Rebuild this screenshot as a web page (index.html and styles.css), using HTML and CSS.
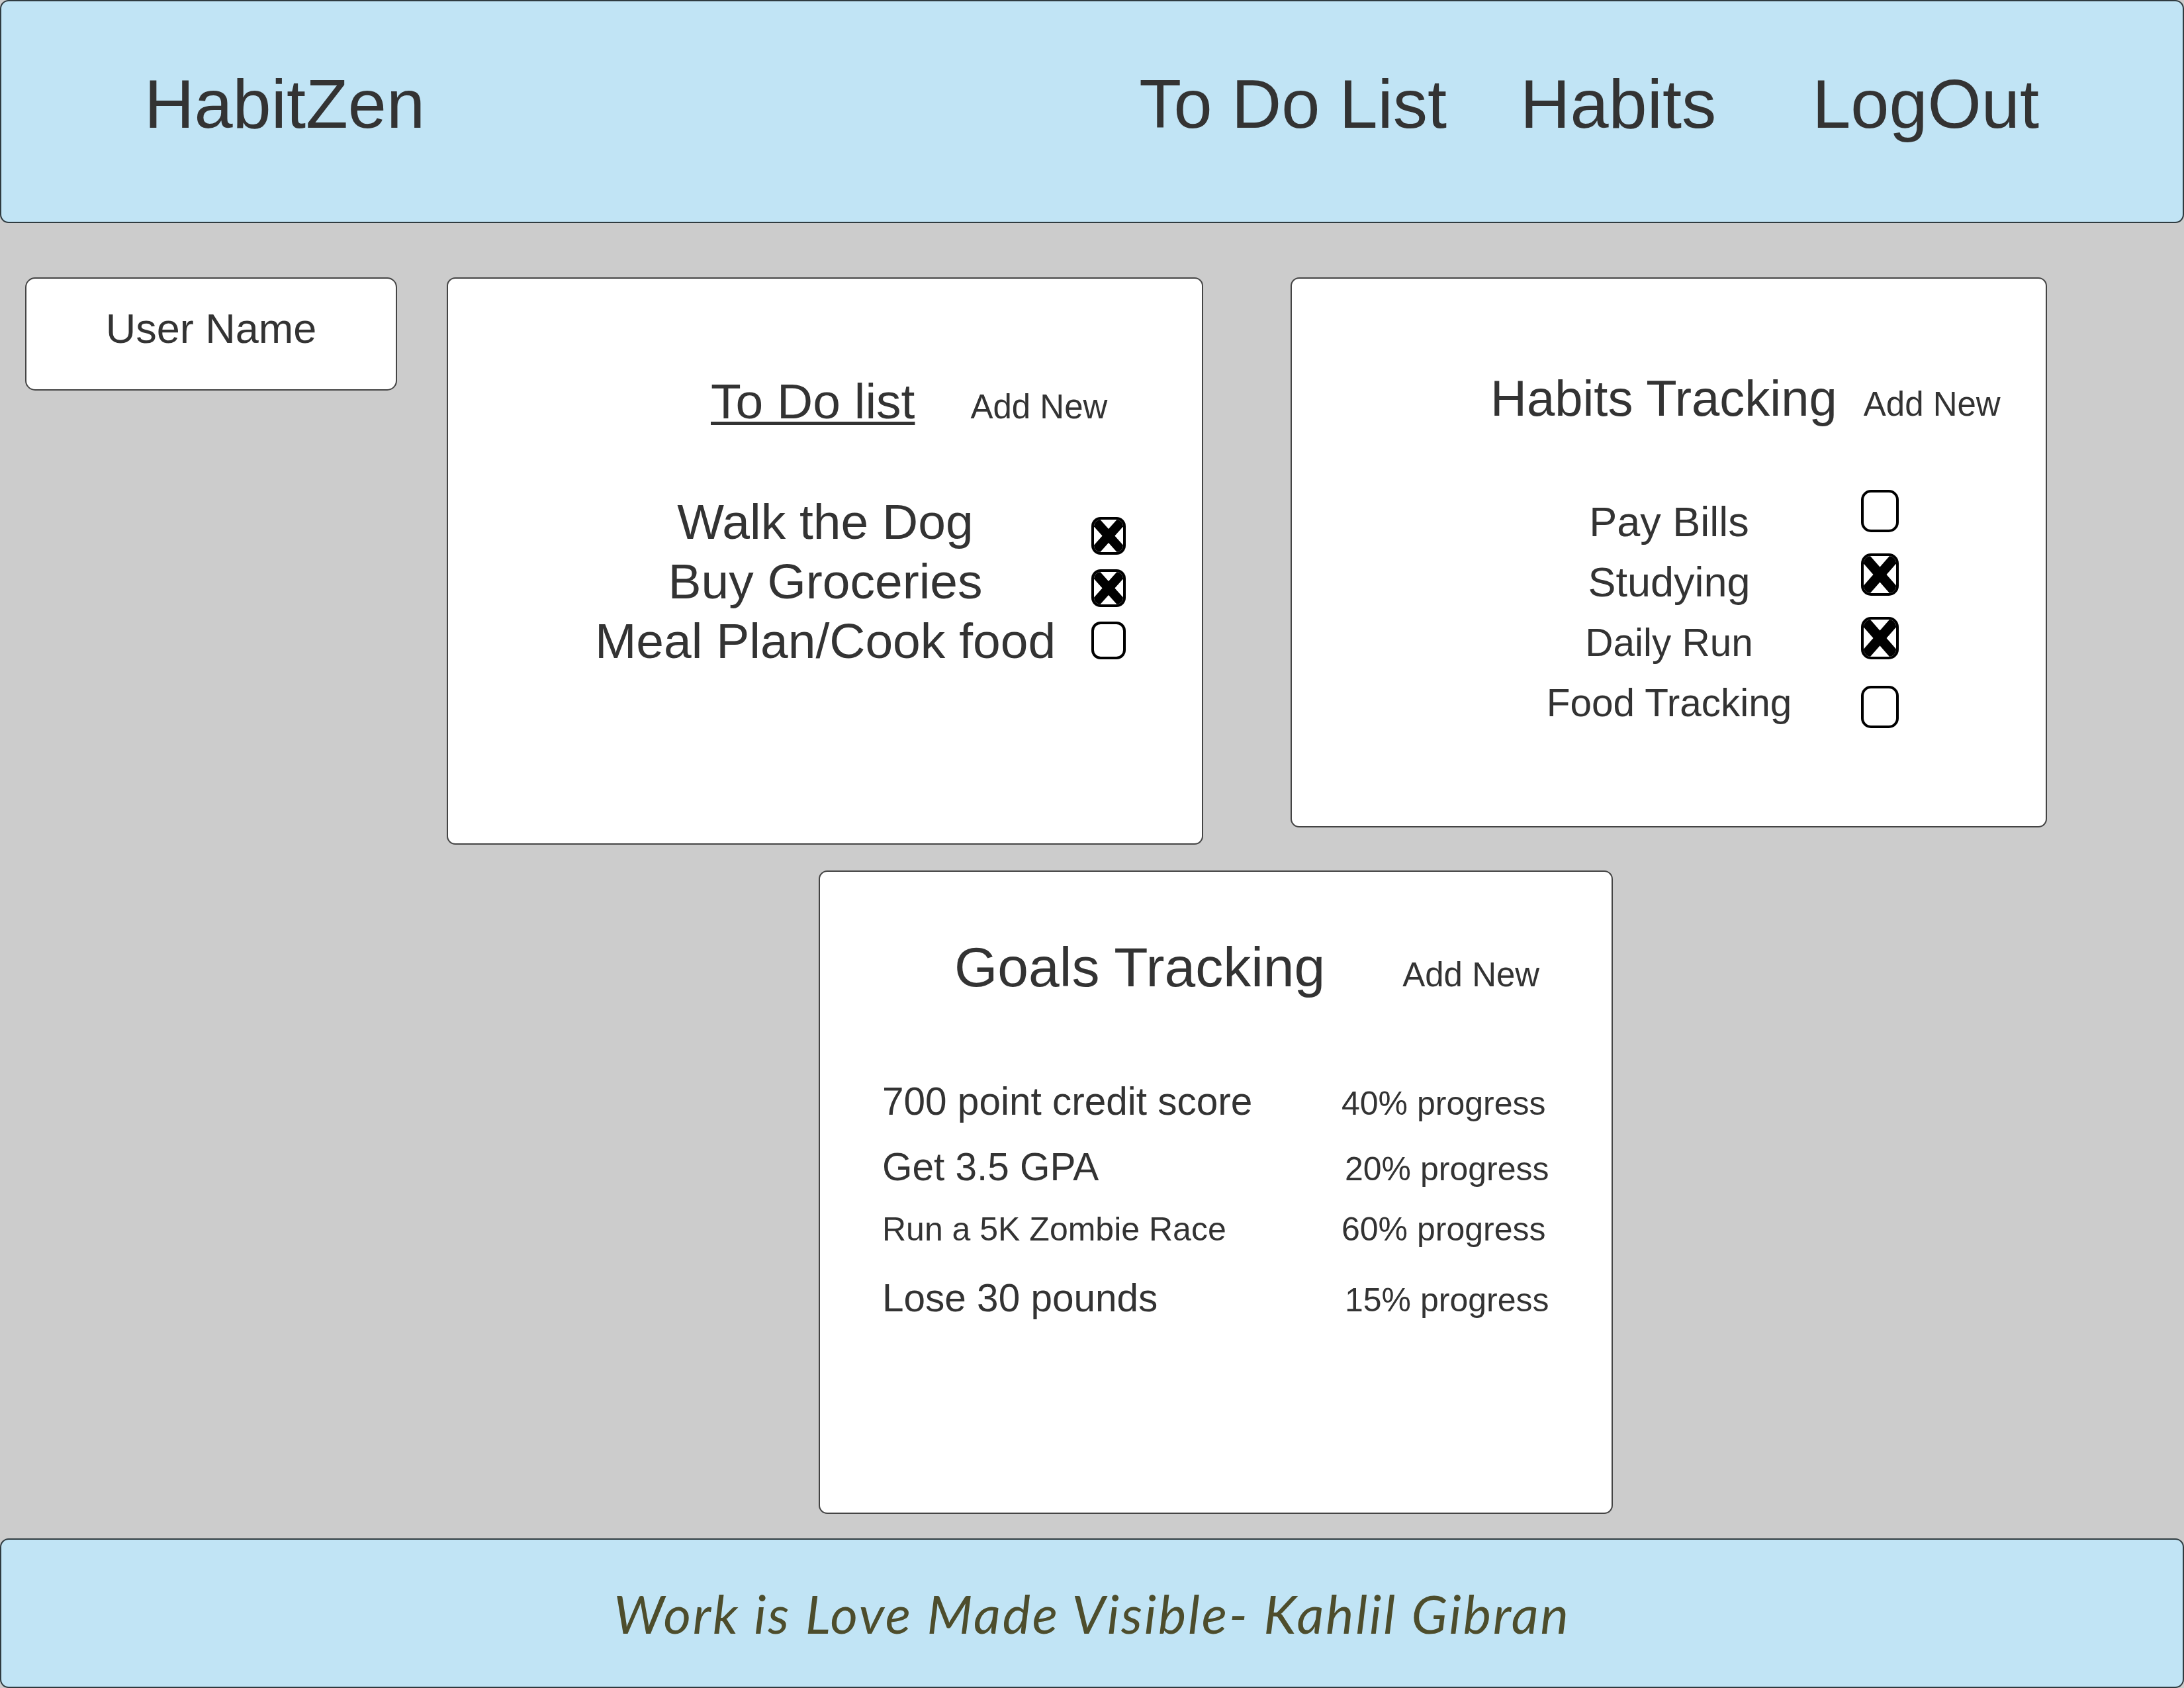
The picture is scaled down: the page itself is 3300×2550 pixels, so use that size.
FILE: index.html
```html
<!DOCTYPE html>
<html lang="en">
<head>
<meta charset="utf-8">
<title>HabitZen</title>
<link rel="stylesheet" href="styles.css">
</head>
<body>
<header class="topbar">
  <div class="brand">HabitZen</div>
  <nav class="nav">
    <a class="nav-link">To Do List</a>
    <a class="nav-link">Habits</a>
    <a class="nav-link nav-link-last">LogOut</a>
  </nav>
</header>

<main class="dashboard">
  <div class="row-top">
    <div class="user-box">User Name</div>

    <section class="card card-todo">
      <div class="card-head todo-head">
        <h2 class="todo-title">To Do list</h2>
        <span class="add-new">Add New</span>
      </div>
      <div class="check-list todo-list">
        <div class="item-col todo-items">
          <div>Walk the Dog</div>
          <div>Buy Groceries</div>
          <div>Meal Plan/Cook food</div>
        </div>
        <div class="check-col todo-checks">
          <span class="check check-sm checked"><svg viewBox="0 0 10 10" preserveAspectRatio="none"><line x1="0" y1="0" x2="10" y2="10"/><line x1="10" y1="0" x2="0" y2="10"/></svg></span>
          <span class="check check-sm checked"><svg viewBox="0 0 10 10" preserveAspectRatio="none"><line x1="0" y1="0" x2="10" y2="10"/><line x1="10" y1="0" x2="0" y2="10"/></svg></span>
          <span class="check check-sm"></span>
        </div>
      </div>
    </section>

    <section class="card card-habits">
      <div class="card-head habits-head">
        <h2 class="habits-title">Habits Tracking</h2>
        <span class="add-new">Add New</span>
      </div>
      <div class="check-list habits-list">
        <div class="item-col habits-items">
          <div class="habit-lg">Pay Bills</div>
          <div class="habit-lg">Studying</div>
          <div class="habit-sm">Daily Run</div>
          <div class="habit-sm">Food Tracking</div>
        </div>
        <div class="check-col habits-checks">
          <span class="check check-lg"></span>
          <span class="check check-lg checked"><svg viewBox="0 0 10 10" preserveAspectRatio="none"><line x1="0" y1="0" x2="10" y2="10"/><line x1="10" y1="0" x2="0" y2="10"/></svg></span>
          <span class="check check-lg checked"><svg viewBox="0 0 10 10" preserveAspectRatio="none"><line x1="0" y1="0" x2="10" y2="10"/><line x1="10" y1="0" x2="0" y2="10"/></svg></span>
          <span class="check check-lg check-last"></span>
        </div>
      </div>
    </section>
  </div>

  <section class="card card-goals">
    <div class="card-head goals-head">
      <h2 class="goals-title">Goals Tracking</h2>
      <span class="add-new">Add New</span>
    </div>
    <div class="goals">
      <div class="goal-row">
        <span class="goal-name">700 point credit score</span>
        <span class="goal-progress">40% progress</span>
      </div>
      <div class="goal-row">
        <span class="goal-name">Get 3.5 GPA</span>
        <span class="goal-progress goal-progress-shift">20% progress</span>
      </div>
      <div class="goal-row">
        <span class="goal-name goal-name-sm">Run a 5K Zombie Race</span>
        <span class="goal-progress">60% progress</span>
      </div>
      <div class="goal-row">
        <span class="goal-name">Lose 30 pounds</span>
        <span class="goal-progress goal-progress-shift">15% progress</span>
      </div>
    </div>
  </section>
</main>

<footer class="footer">
  <p class="quote">Work is Love Made Visible- Kahlil Gibran</p>
</footer>
</body>
</html>
```

FILE: styles.css
```css
* {
  box-sizing: border-box;
  margin: 0;
  padding: 0;
}

html, body {
  width: 3300px;
  height: 2550px;
}

body {
  background: #cccccc;
  font-family: "Liberation Sans", Arial, sans-serif;
  color: #333333;
  display: flex;
  flex-direction: column;
  overflow: hidden;
}

/* ---------- Header ---------- */
.topbar {
  height: 337px;
  flex: 0 0 auto;
  background: #c1e4f5;
  border: 2px solid #2f3b40;
  border-radius: 13px;
  display: flex;
  align-items: flex-start;
  padding: 95px 217px 0 216px;
  font-size: 104.5px;
}

.nav {
  margin-left: auto;
  display: flex;
  gap: 111px;
}

.nav-link {
  color: #333333;
  text-decoration: none;
}

.nav-link-last {
  margin-left: 34px;
}

/* ---------- Main ---------- */
.dashboard {
  padding: 82px 0 0 38px;
  display: flex;
  flex-direction: column;
  align-items: flex-start;
}

.row-top {
  display: flex;
  align-items: flex-start;
  gap: 75px;
}

.user-box {
  width: 562px;
  height: 171px;
  background: #ffffff;
  border: 2px solid #444444;
  border-radius: 15px;
  display: flex;
  align-items: center;
  justify-content: center;
  padding-bottom: 17px;
  font-size: 63px;
}

.card {
  background: #ffffff;
  border: 2px solid #444444;
  border-radius: 13px;
}

.card-todo {
  width: 1143px;
  height: 857px;
  padding-top: 142px;
}

.card-habits {
  width: 1143px;
  height: 831px;
  margin-left: 57px;
  padding-top: 137px;
}

.card-goals {
  width: 1200px;
  height: 972px;
  margin-left: 1199px;
  margin-top: 39px;
  padding-top: 96px;
}

.card-head {
  display: flex;
  align-items: baseline;
}

.card-head h2 {
  font-weight: normal;
}

.add-new {
  font-size: 51px;
}

.todo-head {
  padding-left: 397px;
  gap: 84px;
}

.todo-title {
  font-size: 75px;
  text-decoration: underline;
  text-decoration-thickness: 5px;
  text-underline-offset: 5px;
}

.habits-head {
  padding-left: 300px;
  gap: 40px;
}

.habits-title {
  font-size: 76px;
}

.goals-head {
  padding-left: 203px;
  gap: 117px;
}

.goals-title {
  font-size: 84px;
}

/* ---------- Check lists ---------- */
.check-list {
  display: flex;
  align-items: flex-start;
}

.item-col {
  text-align: center;
}

.check-col {
  display: flex;
  flex-direction: column;
}

.todo-list {
  margin-top: 94px;
  padding-left: 220px;
}

.todo-items {
  width: 700px;
  font-size: 75px;
  line-height: 90px;
}

.todo-checks {
  margin-left: 52px;
  padding-top: 38px;
  gap: 22px;
}

.habits-list {
  margin-top: 95px;
  padding-left: 320px;
}

.habits-items {
  width: 500px;
  line-height: 91px;
  padding-top: 3px;
}

.habit-lg {
  font-size: 63px;
}

.habit-sm {
  font-size: 58.5px;
}

.habits-checks {
  margin-left: 40px;
  gap: 32px;
}

.check {
  display: block;
  background: #ffffff;
  border: 4px solid #000000;
  overflow: hidden;
}

.check svg {
  display: block;
  width: 100%;
  height: 100%;
}

.check line {
  stroke: #000000;
  vector-effect: non-scaling-stroke;
}

.check-sm {
  width: 52px;
  height: 57px;
  border-radius: 14px;
}

.check-sm line {
  stroke-width: 14px;
}

.check-lg {
  width: 57px;
  height: 64px;
  border-radius: 15px;
}

.check-lg line {
  stroke-width: 15px;
}

.check-last {
  margin-top: 8px;
}

/* ---------- Goals ---------- */
.goals {
  margin-top: 120px;
  padding-left: 94px;
}

.goal-row {
  height: 99px;
  display: flex;
  align-items: baseline;
}

.goal-name {
  width: 694px;
  font-size: 58.5px;
}

.goal-name-sm {
  font-size: 50px;
}

.goal-progress {
  font-size: 50px;
}

.goal-progress-shift {
  margin-left: 5px;
}

/* ---------- Footer ---------- */
.footer {
  margin-top: auto;
  height: 226px;
  flex: 0 0 auto;
  background: #c1e4f5;
  border: 2px solid #2f3b40;
  border-radius: 13px;
  display: flex;
  align-items: center;
  justify-content: center;
}

.quote {
  font-family: Lato, "Open Sans", sans-serif;
  font-style: italic;
  font-weight: 400;
  font-size: 80px;
  line-height: 96px;
  letter-spacing: 2.8px;
  color: #4d4d2c;
}
```
